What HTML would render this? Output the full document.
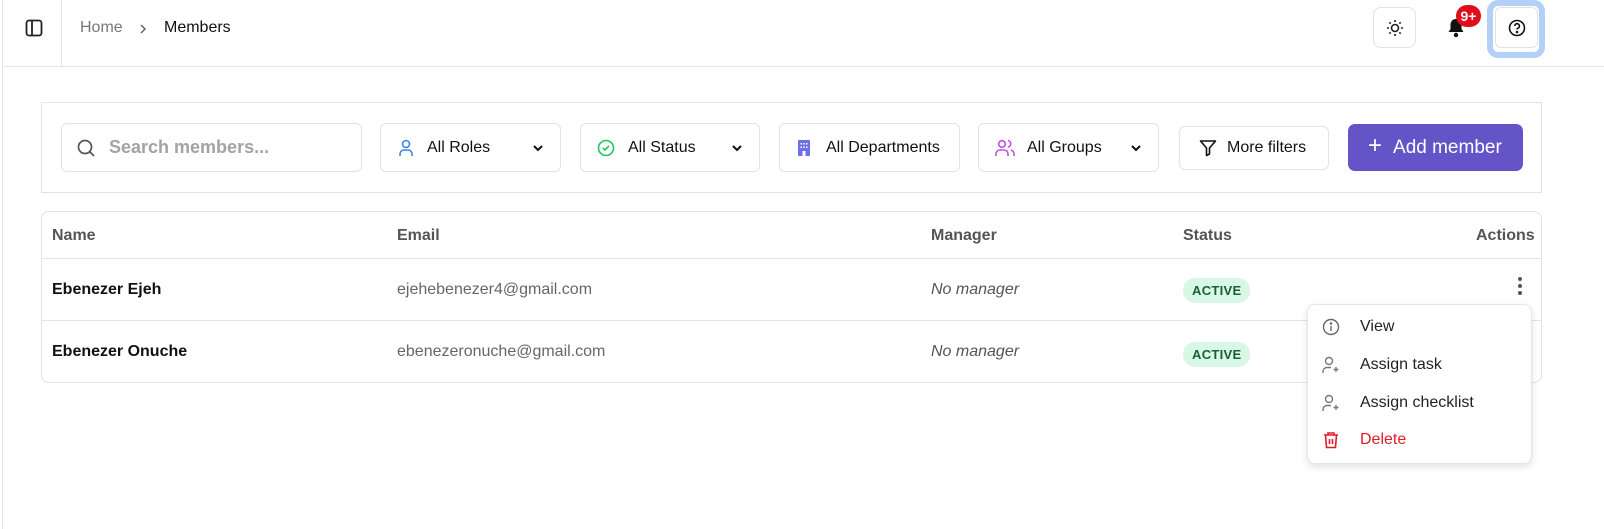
<!DOCTYPE html>
<html><head><style>
*{box-sizing:border-box;margin:0;padding:0}
body{width:1604px;height:529px;background:#fff;font-family:"Liberation Sans",sans-serif;position:relative;overflow:hidden;color:#111}
.a{position:absolute}
.box{position:absolute;border:1px solid #e3e3e3;border-radius:6px;background:#fff;display:flex;align-items:center;font-size:16px;color:#111}
.box svg{flex:none}
.chev{position:absolute;right:16px;top:50%;margin-top:-5px}
th,td{text-align:left}
.badge{position:absolute;background:#d9f7e6;color:#17603a;font-weight:bold;font-size:13px;border-radius:12px;padding:5px 9px;letter-spacing:.3px}
.mi{position:absolute;left:1322px;display:flex;align-items:center;font-size:16px;color:#222}
.mi span{margin-left:20px}
</style></head><body>
<div class="a" style="left:2px;top:0;width:1px;height:529px;background:#e5e5e5"></div>
<div class="a" style="left:61px;top:0;width:1px;height:66px;background:#e5e5e5"></div>
<div class="a" style="left:2px;top:66px;width:1602px;height:1px;background:#e5e5e5"></div>
<svg class="a" style="left:25px;top:19px" width="18" height="18" viewBox="0 0 18 18" fill="none" stroke="#222" stroke-width="1.8"><rect x="1.5" y="1.5" width="15" height="15" rx="2.5"/><line x1="7" y1="2" x2="7" y2="16"/></svg>
<div class="a" style="left:80px;top:19px;font-size:16px;color:#777">Home</div>
<svg class="a" style="left:138px;top:23px" width="10" height="12" viewBox="0 0 10 12" fill="none" stroke="#666" stroke-width="1.5"><path d="M3 2l4 4-4 4"/></svg>
<div class="a" style="left:164px;top:19px;font-size:16px;color:#111">Members</div>

<div class="box" style="left:1373px;top:7px;width:43px;height:41px;justify-content:center;border-radius:8px">
<svg width="20" height="20" viewBox="0 0 20 20" fill="none" stroke="#222" stroke-width="1.6"><circle cx="10" cy="10" r="3.5"/><path d="M10 2v2M10 16v2M2 10h2M16 10h2M4.3 4.3l1.4 1.4M14.3 14.3l1.4 1.4M4.3 15.7l1.4-1.4M14.3 5.7l1.4-1.4"/></svg></div>
<svg class="a" style="left:1446px;top:17px" width="20" height="22" viewBox="0 0 20 22"><path d="M10 2c-3.5 0-5.5 2.5-5.5 6v4l-2 3h15l-2-3V8c0-3.5-2-6-5.5-6z" fill="#111"/><circle cx="10" cy="18" r="2.2" fill="#111"/></svg>
<div class="a" style="left:1456px;top:5px;width:25px;height:22px;background:#e00d1a;border-radius:11px;color:#fff;font-weight:bold;font-size:14px;text-align:center;line-height:22px">9+</div>
<div class="a" style="left:1487px;top:0;width:58px;height:58px;border:6px solid #b4d0f8;border-radius:11px;background:#fff"></div>
<div class="box" style="left:1495px;top:7px;width:43px;height:41px;justify-content:center;border-radius:6px">
<svg width="18" height="18" viewBox="0 0 18 18" fill="none" stroke="#111" stroke-width="1.6"><circle cx="9" cy="9" r="7.5"/><path d="M6.8 7a2.3 2.3 0 1 1 3 2.2c-.6.3-.8.7-.8 1.3"/><circle cx="9" cy="13" r=".5" fill="#111"/></svg></div>

<div class="a" style="left:41px;top:102px;width:1501px;height:91px;border:1px solid #e3e3e3"></div>
<div class="box" style="left:61px;top:123px;width:301px;height:49px;padding-left:14px">
<svg width="20" height="20" viewBox="0 0 20 20" fill="none" stroke="#555" stroke-width="1.7"><circle cx="9" cy="9" r="6.5"/><path d="M14 14l4 4"/></svg>
<span style="margin-left:13px;color:#a3a3a3;font-weight:bold;font-size:18px">Search members...</span></div>
<div class="box" style="left:380px;top:123px;width:181px;height:49px;padding-left:17px">
<svg width="16" height="18" viewBox="0 0 16 18" fill="none" stroke="#3b82f6" stroke-width="1.6"><circle cx="8" cy="5" r="3.5"/><path d="M2 17v-2a4 4 0 0 1 4-4h4a4 4 0 0 1 4 4v2"/></svg>
<span style="margin-left:13px">All Roles</span>
<svg class="chev" width="12" height="10" viewBox="0 0 12 10" fill="none" stroke="#111" stroke-width="2"><path d="M2 3l4 4 4-4"/></svg></div>
<div class="box" style="left:580px;top:123px;width:180px;height:49px;padding-left:16px">
<svg width="18" height="18" viewBox="0 0 18 18" fill="none" stroke="#22c55e" stroke-width="1.6"><circle cx="9" cy="9" r="7.5"/><path d="M6 9l2 2 4-4"/></svg>
<span style="margin-left:13px">All Status</span>
<svg class="chev" width="12" height="10" viewBox="0 0 12 10" fill="none" stroke="#111" stroke-width="2"><path d="M2 3l4 4 4-4"/></svg></div>
<div class="box" style="left:779px;top:123px;width:181px;height:49px;padding-left:17px">
<svg width="14" height="18" viewBox="0 0 14 18"><rect x="1" y="1" width="12" height="16" rx="1" fill="#6d6ee8"/><g fill="#fff"><rect x="3.5" y="4" width="1.5" height="1.5"/><rect x="6.3" y="4" width="1.5" height="1.5"/><rect x="9" y="4" width="1.5" height="1.5"/><rect x="3.5" y="7.5" width="1.5" height="1.5"/><rect x="6.3" y="7.5" width="1.5" height="1.5"/><rect x="9" y="7.5" width="1.5" height="1.5"/><rect x="5.5" y="12" width="3" height="5"/></g></svg>
<span style="margin-left:15px">All Departments</span></div>
<div class="box" style="left:978px;top:123px;width:181px;height:49px;padding-left:16px">
<svg width="20" height="18" viewBox="0 0 20 18" fill="none" stroke="#c04ee8" stroke-width="1.6"><circle cx="7" cy="5" r="3.3"/><path d="M1 17v-2a4 4 0 0 1 4-4h4a4 4 0 0 1 4 4v2M13 1.5a3.3 3.3 0 0 1 0 6.5M16 11a4 4 0 0 1 3 4v2"/></svg>
<span style="margin-left:12px">All Groups</span>
<svg class="chev" width="12" height="10" viewBox="0 0 12 10" fill="none" stroke="#111" stroke-width="2"><path d="M2 3l4 4 4-4"/></svg></div>
<div class="box" style="left:1179px;top:126px;width:150px;height:44px;padding-left:19px">
<svg width="18" height="18" viewBox="0 0 18 18" fill="none" stroke="#111" stroke-width="1.6" stroke-linejoin="round"><path d="M1.5 2h15l-6 7v6l-3 1.5V9z"/></svg>
<span style="margin-left:10px">More filters</span></div>
<div class="a" style="left:1348px;top:124px;width:175px;height:47px;background:#6554c8;border-radius:7px;color:#fff;font-size:19px;display:flex;align-items:center;padding-left:20px">
<span style="font-size:24px;font-weight:300;margin-right:11px;margin-top:-3px">+</span>Add member</div>

<div class="a" style="left:41px;top:211px;width:1501px;height:172px;border:1px solid #e3e3e3;border-radius:8px"></div>
<div class="a" style="left:42px;top:258px;width:1499px;height:1px;background:#e3e3e3"></div>
<div class="a" style="left:42px;top:320px;width:1499px;height:1px;background:#e3e3e3"></div>
<div class="a" style="top:227px;left:52px;font-weight:bold;color:#555;font-size:16px">Name</div>
<div class="a" style="top:227px;left:397px;font-weight:bold;color:#555;font-size:16px">Email</div>
<div class="a" style="top:227px;left:931px;font-weight:bold;color:#555;font-size:16px">Manager</div>
<div class="a" style="top:227px;left:1183px;font-weight:bold;color:#555;font-size:16px">Status</div>
<div class="a" style="top:227px;left:1476px;font-weight:bold;color:#555;font-size:16px">Actions</div>
<div class="a" style="top:281px;left:52px;font-weight:bold;font-size:16px">Ebenezer Ejeh</div>
<div class="a" style="top:281px;left:397px;color:#666;font-size:16px">ejehebenezer4@gmail.com</div>
<div class="a" style="top:281px;left:931px;color:#555;font-style:italic;font-size:16px">No manager</div>
<div class="badge" style="top:278px;left:1183px">ACTIVE</div>
<div class="a" style="top:277px;left:1518px;width:4px"><div style="width:4px;height:4px;border-radius:2px;background:#555;margin-bottom:3px"></div><div style="width:4px;height:4px;border-radius:2px;background:#555;margin-bottom:3px"></div><div style="width:4px;height:4px;border-radius:2px;background:#555"></div></div>
<div class="a" style="top:343px;left:52px;font-weight:bold;font-size:16px">Ebenezer Onuche</div>
<div class="a" style="top:343px;left:397px;color:#666;font-size:16px">ebenezeronuche@gmail.com</div>
<div class="a" style="top:343px;left:931px;color:#555;font-style:italic;font-size:16px">No manager</div>
<div class="badge" style="top:342px;left:1183px">ACTIVE</div>

<div class="a" style="left:1307px;top:304px;width:225px;height:160px;background:#fff;border:1px solid #e6e6e6;border-radius:8px;box-shadow:0 3px 8px rgba(0,0,0,.12)"></div>
<div class="mi" style="top:318px"><svg width="18" height="18" viewBox="0 0 18 18" fill="none" stroke="#666" stroke-width="1.4"><circle cx="9" cy="9" r="7.5"/><path d="M9 8v5"/><circle cx="9" cy="5.5" r=".6" fill="#666"/></svg><span>View</span></div>
<div class="mi" style="top:356px"><svg width="18" height="18" viewBox="0 0 18 18" fill="none" stroke="#777" stroke-width="1.4"><circle cx="7" cy="5" r="3.5"/><path d="M1 17v-1.5a4 4 0 0 1 4-4h4M14 11v5M11.5 13.5h5"/></svg><span>Assign task</span></div>
<div class="mi" style="top:394px"><svg width="18" height="18" viewBox="0 0 18 18" fill="none" stroke="#777" stroke-width="1.4"><circle cx="7" cy="5" r="3.5"/><path d="M1 17v-1.5a4 4 0 0 1 4-4h4M14 11v5M11.5 13.5h5"/></svg><span>Assign checklist</span></div>
<div class="mi" style="top:431px;color:#e11d2a"><svg width="18" height="18" viewBox="0 0 18 18" fill="none" stroke="#e11d2a" stroke-width="1.6"><path d="M2 4h14M6 4V2h6v2M3.5 4l1 12.5h9l1-12.5M7.5 8v5M10.5 8v5"/></svg><span>Delete</span></div>
</body></html>
